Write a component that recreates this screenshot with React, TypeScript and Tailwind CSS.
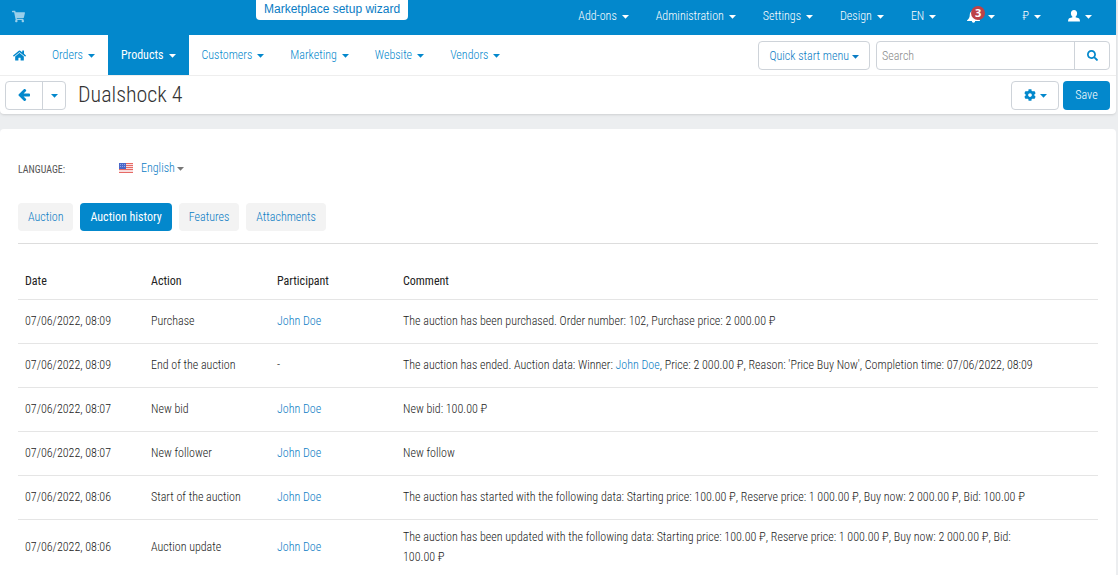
import { ReactNode, useState } from "react";
import { FaCog, FaHome, FaSearch, FaShoppingCart } from "react-icons/fa";

interface HistoryProps {
  date: string;
  action: string;
  participant?: string;
  comment: ReactNode;
}

const topMenu = ["Add-ons", "Administration", "Settings", "Design", "EN"];

const mainMenu = [
  "Orders",
  "Products",
  "Customers",
  "Marketing",
  "Website",
  "Vendors",
];

const tabs = ["Auction", "Auction history", "Features", "Attachments"];

const history: HistoryProps[] = [
  {
    date: "07/06/2022, 08:09",
    action: "Purchase",
    participant: "John Doe",
    comment:
      "The auction has been purchased. Order number: 102, Purchase price: 2 000.00 ₽",
  },
  {
    date: "07/06/2022, 08:09",
    action: "End of the auction",
    comment: (
      <>
        The auction has ended. Auction data: Winner:{" "}
        <a href="#" className="text-[#0a7cc4]">
          John Doe
        </a>
        , Price: 2 000.00 ₽, Reason: 'Price Buy Now', Completion time:
        07/06/2022, 08:09
      </>
    ),
  },
  {
    date: "07/06/2022, 08:07",
    action: "New bid",
    participant: "John Doe",
    comment: "New bid: 100.00 ₽",
  },
  {
    date: "07/06/2022, 08:07",
    action: "New follower",
    participant: "John Doe",
    comment: "New follow",
  },
  {
    date: "07/06/2022, 08:06",
    action: "Start of the auction",
    participant: "John Doe",
    comment:
      "The auction has started with the following data: Starting price: 100.00 ₽, Reserve price: 1 000.00 ₽, Buy now: 2 000.00 ₽, Bid: 100.00 ₽",
  },
  {
    date: "07/06/2022, 08:06",
    action: "Auction update",
    participant: "John Doe",
    comment:
      "The auction has been updated with the following data: Starting price: 100.00 ₽, Reserve price: 1 000.00 ₽, Buy now: 2 000.00 ₽, Bid: 100.00 ₽",
  },
];

function Caret({ className = "" }: { className?: string }) {
  return (
    <svg
      viewBox="0 0 7 4"
      className={`mt-0.5 h-1 w-[7px] shrink-0 fill-current ${className}`}
    >
      <path d="M0 0h7L3.500 3.700z" />
    </svg>
  );
}

function Bell() {
  return (
    <svg viewBox="0 0 13 13" className="size-[13px] fill-current">
      <path d="M6.500 0c.5 0 .9.400.9.900 1.800.4 2.800 1.900 2.800 3.700 0 3 1 4.600 2.800 5.900v.6H8.200a1.700 1.700 0 0 1-3.400 0H0v-.6c1.800-1.300 2.800-2.900 2.800-5.900 0-1.800 1-3.300 2.800-3.700 0-.5.400-.9.900-.9z" />
    </svg>
  );
}

function User() {
  return (
    <svg viewBox="0 0 12 12" className="size-3 fill-current">
      <path d="M6 0c1.900 0 3.100 1.400 3.100 3.300 0 1.400-.6 2.700-1.500 3.400v.6c1.900.5 4 .9 4.200 2.600l.2 1.600H0l.2-1.600C.4 8.200 2.500 7.800 4.400 7.300v-.6C3.500 6 2.900 4.700 2.900 3.300 2.900 1.400 4.100 0 6 0z" />
    </svg>
  );
}

function ArrowLeft() {
  return (
    <svg viewBox="0 190 1536 1540" className="size-3 fill-current">
      <path d="M1536 896v128q0 53-32.500 90.500t-84.500 37.500h-704l293 294q38 36 38 90t-38 90l-75 76q-37 37-90 37-52 0-91-37l-651-652q-37-37-37-90 0-52 37-91l651-650q38-38 91-38 52 0 90 38l75 74q38 38 38 91t-38 91l-293 293h704q52 0 84.500 37.500t32.500 90.500z" />
    </svg>
  );
}

function FlagUS() {
  return (
    <svg viewBox="0 0 14 10" className="h-2.5 w-3.5">
      <path d="M0 0h14v10H0z" fill="#f9dede" />
      <path
        d="M0 .5h14M0 2.500h14M0 4.500h14M0 6.500h14M0 9.500h14"
        stroke="#e66a66"
      />
      <path d="M0 0h7v6H0z" fill="#4a68c8" />
      <path
        d="M1 1.500h5M1 3.500h5"
        stroke="#8fa6ea"
        strokeDasharray="1 1"
      />
    </svg>
  );
}

export default function App() {
  const [tab, setTab] = useState<string>("Auction history");
  const [search, setSearch] = useState<string>("");

  return (
    <div className="min-h-screen bg-[#eceef0] pr-0.5 font-['Roboto_Condensed','Roboto',sans-serif] text-xs leading-5 font-light text-[#222]">
      <header className="rounded-b bg-white shadow">
        <div className="flex h-[35px] items-start bg-[#0388cc] text-white">
          <a href="#" aria-label="Storefront" className="pt-2.5 pl-3">
            <FaShoppingCart className="size-[13px] opacity-60" />
          </a>
          <a
            href="#"
            className="ml-[231px] h-5 rounded-b bg-white px-2 font-['Liberation_Sans',Arial,sans-serif] leading-[18px] font-normal text-[#0a7cc4]"
          >
            Marketplace setup wizard
          </a>
          <nav className="ml-auto flex items-center gap-[27px] pt-1.5 pr-6">
            {topMenu.map((item) => (
              <button key={item} className="flex items-center gap-[5px]">
                {item}
                <Caret />
              </button>
            ))}
            <button
              aria-label="Notifications"
              className="relative ml-1 flex items-center gap-2"
            >
              <Bell />
              <span className="absolute -top-1 left-1 size-3.5 rounded-full bg-[#bd4247] text-center font-['Open_Sans',sans-serif] text-[11px] leading-3.5 font-bold">
                3
              </span>
              <Caret />
            </button>
            <button className="flex items-center gap-[5px]">
              ₽<Caret />
            </button>
            <button
              aria-label="Account"
              className="flex items-center gap-[5px]"
            >
              <User />
              <Caret />
            </button>
          </nav>
        </div>

        <div className="flex h-[41px] items-start border-b border-[#eee] pr-1.5 text-[#0388cc]">
          <a href="#" aria-label="Home" className="py-3.5 pl-[13px]">
            <FaHome className="size-[13px]" />
          </a>
          <nav className="ml-[13px] flex">
            {mainMenu.map((item) => (
              <button
                key={item}
                className={`flex h-10 items-center gap-[5px] px-[13px] ${
                  item === "Products" ? "bg-[#0388cc] font-normal text-white" : ""
                }`}
              >
                {item}
                <Caret />
              </button>
            ))}
          </nav>
          <button className="mt-1.5 ml-auto flex h-[29px] items-center gap-[3px] rounded-sm border border-[#ced3d9] px-2.5 text-[#0a7cc4]">
            Quick start menu
            <Caret />
          </button>
          <form
            onSubmit={(e) => e.preventDefault()}
            className="mt-1.5 ml-1.5 flex h-[29px] w-[234px] rounded-sm border border-[#ced3d9]"
          >
            <input
              type="text"
              aria-label="Search"
              placeholder="Search"
              value={search}
              onChange={(e) => setSearch(e.target.value)}
              className="min-w-0 flex-1 px-[5px] placeholder:text-[#888]"
            />
            <button
              type="submit"
              aria-label="Submit search"
              className="flex w-[35px] items-center justify-center border-l border-[#ced3d9]"
            >
              <FaSearch className="size-[11px]" />
            </button>
          </form>
        </div>

        <div className="flex h-[38px] items-center pr-1.5 pl-[5px] text-[#0388cc]">
          <div className="flex h-[29px] rounded-sm border border-[#ced3d9]">
            <button
              aria-label="Back"
              className="flex w-9 items-center justify-center"
            >
              <ArrowLeft />
            </button>
            <button
              aria-label="More"
              className="flex w-[23px] items-center justify-center border-l border-[#ced3d9]"
            >
              <Caret />
            </button>
          </div>
          <h1 className="ml-3 text-[22px] leading-7 text-[#333]">
            Dualshock 4
          </h1>
          <button
            aria-label="Settings"
            className="ml-auto flex h-[29px] w-12 items-center justify-center gap-1 rounded-sm border border-[#ced3d9]"
          >
            <FaCog className="size-3" />
            <Caret />
          </button>
          <button className="ml-1 h-[29px] w-[47px] rounded-sm bg-[#0388cc] text-white">
            Save
          </button>
        </div>
      </header>

      <main className="mt-[15px] min-h-[446px] rounded-t bg-white px-[18px] pt-[29px]">
        <div className="flex items-center">
          <span className="w-[101px] pt-1 text-[10px] leading-4 font-normal text-[#555]">
            LANGUAGE:
          </span>
          <FlagUS />
          <button className="ml-2 flex items-center gap-0.5 text-[#0a7cc4]">
            English
            <Caret className="text-[#777]" />
          </button>
        </div>

        <div className="mt-[25px] flex gap-[7px] border-b border-[#ddd] pb-3">
          {tabs.map((item) => (
            <button
              key={item}
              onClick={() => setTab(item)}
              className={`h-7 rounded px-2.5 ${
                tab === item
                  ? "bg-[#0388cc] font-normal text-white"
                  : "bg-[#f3f3f3] text-[#0a7cc4]"
              }`}
            >
              {item}
            </button>
          ))}
        </div>

        <table className="mt-[19px] w-full table-fixed text-left">
          <thead>
            <tr className="h-9 border-b border-[#e5e5e5]">
              <th className="w-[126px] px-[7px] font-normal">Date</th>
              <th className="w-[126px] px-[7px] font-normal">Action</th>
              <th className="w-[126px] px-[7px] font-normal">Participant</th>
              <th className="px-[7px] font-normal">Comment</th>
            </tr>
          </thead>
          <tbody>
            {history.map((row, i) => (
              <tr
                key={i}
                className="h-11 border-b border-[#e5e5e5] last:border-b-0"
              >
                <td className="px-[7px] py-[7px]">{row.date}</td>
                <td className="px-[7px] py-[7px]">{row.action}</td>
                <td className="px-[7px] py-[7px]">
                  {row.participant ? (
                    <a href="#" className="text-[#0a7cc4]">
                      {row.participant}
                    </a>
                  ) : (
                    "-"
                  )}
                </td>
                <td className="py-[7px] pr-15 pl-[7px]">{row.comment}</td>
              </tr>
            ))}
          </tbody>
        </table>
      </main>
    </div>
  );
}
